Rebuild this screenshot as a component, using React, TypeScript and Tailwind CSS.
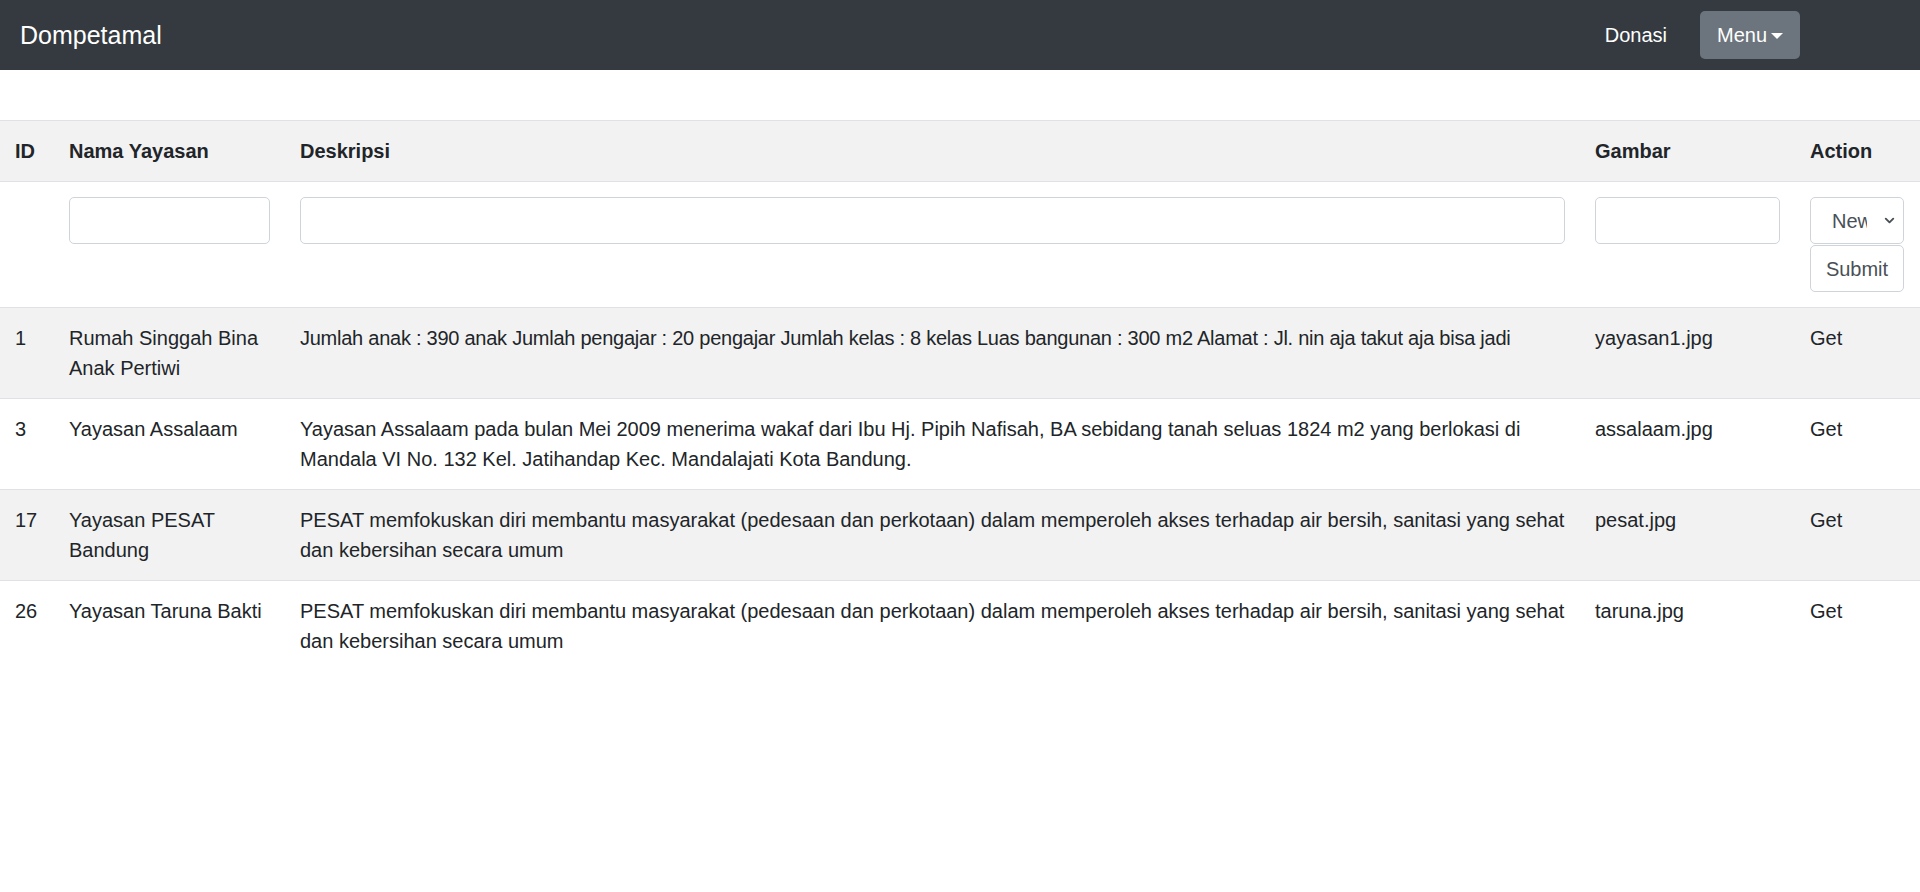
import { ChevronDown } from "lucide-react";

type Yayasan = {
  id: number;
  nama: string;
  deskripsi: string;
  gambar: string;
  tight?: boolean;
};

const rows: Yayasan[] = [
  {
    id: 1,
    nama: "Rumah Singgah Bina Anak Pertiwi",
    deskripsi:
      "Jumlah anak : 390 anak Jumlah pengajar : 20 pengajar Jumlah kelas : 8 kelas Luas bangunan : 300 m2 Alamat : Jl. nin aja takut aja bisa jadi",
    gambar: "yayasan1.jpg",
    tight: true,
  },
  {
    id: 3,
    nama: "Yayasan Assalaam",
    deskripsi:
      "Yayasan Assalaam pada bulan Mei 2009 menerima wakaf dari Ibu Hj. Pipih Nafisah, BA sebidang tanah seluas 1824 m2 yang berlokasi di Mandala VI No. 132 Kel. Jatihandap Kec. Mandalajati Kota Bandung.",
    gambar: "assalaam.jpg",
  },
  {
    id: 17,
    nama: "Yayasan PESAT Bandung",
    deskripsi:
      "PESAT memfokuskan diri membantu masyarakat (pedesaan dan perkotaan) dalam memperoleh akses terhadap air bersih, sanitasi yang sehat dan kebersihan secara umum",
    gambar: "pesat.jpg",
  },
  {
    id: 26,
    nama: "Yayasan Taruna Bakti",
    deskripsi:
      "PESAT memfokuskan diri membantu masyarakat (pedesaan dan perkotaan) dalam memperoleh akses terhadap air bersih, sanitasi yang sehat dan kebersihan secara umum",
    gambar: "taruna.jpg",
  },
];

export default function App() {
  const cell = "px-[15px] py-[15px] align-top border-t border-[#dee2e6]";
  const input =
    "block w-full h-[47px] rounded-[5px] border border-[#ced4da] bg-white";

  return (
    <div className="min-h-screen bg-white text-[20px] leading-[30px] text-[#212529] font-['Liberation_Sans',Arial,sans-serif]">
      {/* Navbar */}
      <nav className="h-[70px] bg-[#343a40] flex items-center pl-[20px] pr-[120px]">
        <span className="text-white text-[25px] leading-[37px]">Dompetamal</span>
        <div className="ml-auto flex items-center gap-[23px]">
          <span className="text-white px-[10px]">Donasi</span>
          <button className="h-[48px] w-[100px] rounded-[5px] bg-[#6c757d] text-white flex items-center justify-center gap-[4px]">
            Menu
            <span className="w-0 h-0 border-x-[6px] border-x-transparent border-t-[6px] border-t-white mt-[1px]" />
          </button>
        </div>
      </nav>

      {/* Table */}
      <table className="mt-[50px] w-full table-fixed border-collapse">
        <tbody>
          <tr className="bg-[#f2f2f2] font-bold">
            <td className={`${cell} w-[54px]`}>ID</td>
            <td className={`${cell} w-[231px]`}>Nama Yayasan</td>
            <td className={cell}>Deskripsi</td>
            <td className={`${cell} w-[215px]`}>Gambar</td>
            <td className={`${cell} w-[125px]`}>Action</td>
          </tr>
          <tr>
            <td className={cell}></td>
            <td className={cell}>
              <div className={input} />
            </td>
            <td className={cell}>
              <div className={input} />
            </td>
            <td className={cell}>
              <div className={input} />
            </td>
            <td className={cell}>
              <div className="flex flex-col gap-[1px] w-[94px]">
                <div className="h-[47px] rounded-[5px] border border-[#ced4da] bg-white flex items-center pl-[21px] pr-[6px] text-[#495057]">
                  <span className="w-[35px] overflow-hidden whitespace-nowrap">New</span>
                  <ChevronDown className="ml-auto w-[15px] h-[15px]" strokeWidth={3} />
                </div>
                <button className="h-[47px] rounded-[5px] border border-[#ced4da] bg-white text-[#495057]">
                  Submit
                </button>
              </div>
            </td>
          </tr>
          {rows.map((r, i) => (
            <tr key={r.id} className={i % 2 === 0 ? "bg-[#f2f2f2]" : "bg-white"}>
              <td className={cell}>{r.id}</td>
              <td className={cell}>
                <div className="min-h-[60px]">{r.nama}</div>
              </td>
              <td className={`${cell} ${r.tight ? "tracking-[-0.25px]" : ""}`}>{r.deskripsi}</td>
              <td className={cell}>{r.gambar}</td>
              <td className={cell}>Get</td>
            </tr>
          ))}
        </tbody>
      </table>
    </div>
  );
}
